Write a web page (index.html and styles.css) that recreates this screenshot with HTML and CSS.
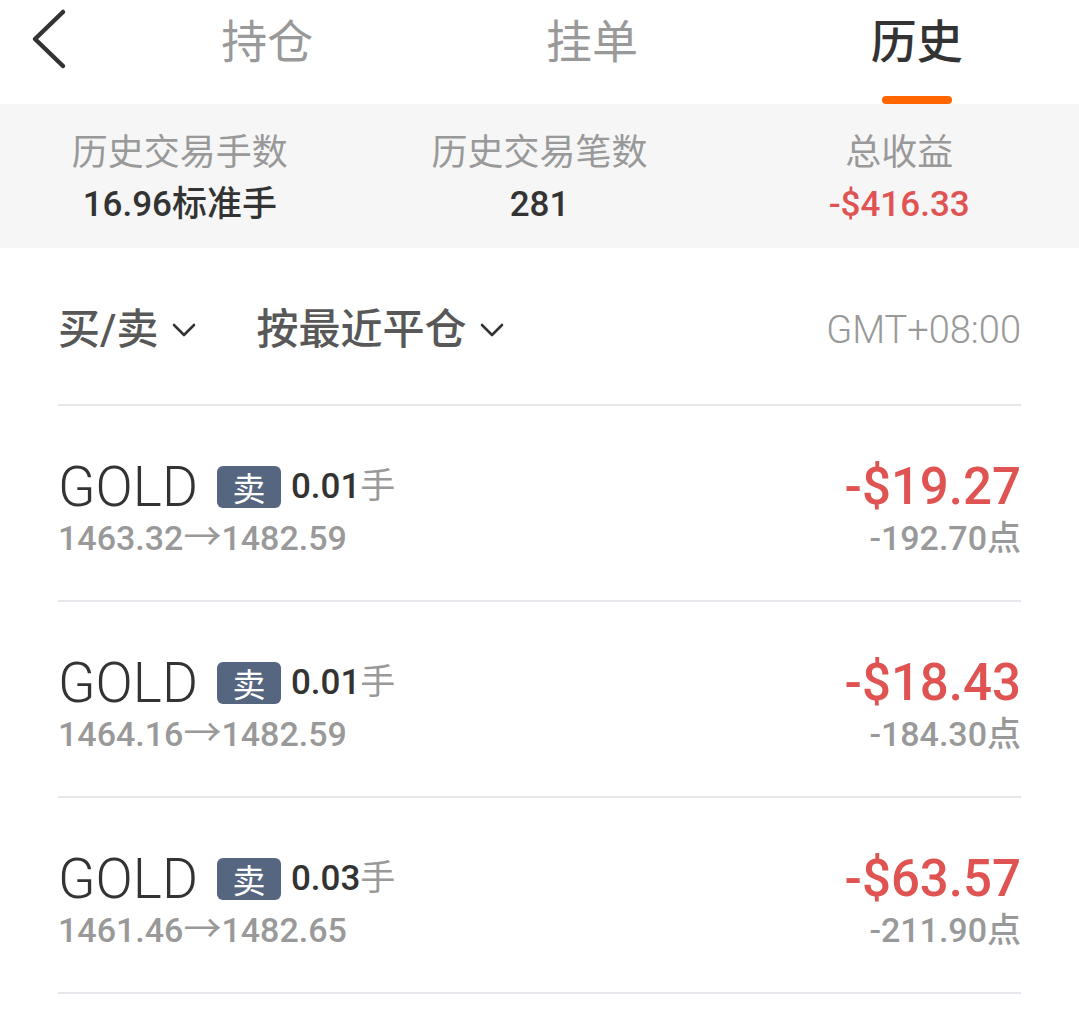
FILE: index.html
```html
<!DOCTYPE html>
<html lang="zh-CN">
<head>
    <meta charset="UTF-8">
    <meta name="viewport" content="width=device-width, initial-scale=1.0">
    <title>历史</title>
    <link rel="stylesheet" href="styles.css">
</head>
<body>

    <header class="topbar">
        <a class="back" href="#">
            <svg width="36" height="62" viewBox="0 0 36 62">
                <polyline points="32,4 4,31 32,58" fill="none" stroke="#333" stroke-width="4.5" stroke-linecap="round" stroke-linejoin="round"/>
            </svg>
        </a>
        <div class="tab">持仓</div>
        <div class="tab">挂单</div>
        <div class="tab active">历史</div>
    </header>

    <section class="summary">
        <div class="stat">
            <div class="stat-label">历史交易手数</div>
            <div class="stat-value">16.96标准手</div>
        </div>
        <div class="stat">
            <div class="stat-label">历史交易笔数</div>
            <div class="stat-value">281</div>
        </div>
        <div class="stat">
            <div class="stat-label">总收益</div>
            <div class="stat-value loss">-$416.33</div>
        </div>
    </section>

    <div class="filters">
        <div class="filter">买/卖
            <svg class="caret" width="24" height="14" viewBox="0 0 24 14"><polyline points="2,2 12,12 22,2" fill="none" stroke="#333" stroke-width="2.6" stroke-linecap="round" stroke-linejoin="round"/></svg>
        </div>
        <div class="filter">按最近平仓
            <svg class="caret" width="24" height="14" viewBox="0 0 24 14"><polyline points="2,2 12,12 22,2" fill="none" stroke="#333" stroke-width="2.6" stroke-linecap="round" stroke-linejoin="round"/></svg>
        </div>
        <div class="tz">GMT+08:00</div>
    </div>

    <ul class="trades">
        <li class="trade">
            <div class="trade-left">
                <div class="trade-main">
                    <span class="symbol">GOLD</span>
                    <span class="side">卖</span>
                    <span class="lots"><b>0.01</b>手</span>
                </div>
                <div class="trade-sub">1463.32<span class="arrow">→</span>1482.59</div>
            </div>
            <div class="trade-right">
                <div class="pnl">-$19.27</div>
                <div class="trade-sub">-192.70点</div>
            </div>
        </li>
        <li class="trade">
            <div class="trade-left">
                <div class="trade-main">
                    <span class="symbol">GOLD</span>
                    <span class="side">卖</span>
                    <span class="lots"><b>0.01</b>手</span>
                </div>
                <div class="trade-sub">1464.16<span class="arrow">→</span>1482.59</div>
            </div>
            <div class="trade-right">
                <div class="pnl">-$18.43</div>
                <div class="trade-sub">-184.30点</div>
            </div>
        </li>
        <li class="trade">
            <div class="trade-left">
                <div class="trade-main">
                    <span class="symbol">GOLD</span>
                    <span class="side">卖</span>
                    <span class="lots"><b>0.03</b>手</span>
                </div>
                <div class="trade-sub">1461.46<span class="arrow">→</span>1482.65</div>
            </div>
            <div class="trade-right">
                <div class="pnl">-$63.57</div>
                <div class="trade-sub">-211.90点</div>
            </div>
        </li>
    </ul>

</body>
</html>
```

FILE: styles.css
```css
body {
    margin: 0;
    background: #fff;
    color: #333;
    font-family: Roboto, "Noto Sans CJK SC", sans-serif;
}

.topbar {
    display: flex;
    height: 104px;
    background: #fff;
}

.back {
    display: flex;
    align-items: flex-start;
    width: 105px;
    flex-shrink: 0;
    padding: 8px 0 0 31px;
    box-sizing: border-box;
}

.tab {
    flex: 1;
    display: flex;
    flex-direction: column;
    align-items: center;
    font-family: "Noto Sans CJK SC", sans-serif;
    font-size: 46px;
    line-height: 76px;
    color: #999;
}

.tab.active {
    color: #333;
    font-weight: 500;
}

.tab.active::after {
    content: "";
    margin-top: auto;
    width: 70px;
    height: 8px;
    border-radius: 4px;
    background: #ff6600;
}

.summary {
    display: flex;
    height: 144px;
    padding-top: 21px;
    box-sizing: border-box;
    background: #f6f6f6;
}

.stat {
    flex: 1;
    text-align: center;
}

.stat-label {
    font-family: "Noto Sans CJK SC", sans-serif;
    font-size: 36px;
    line-height: 48px;
    color: #999;
}

.stat-value {
    margin-top: 8px;
    font-size: 35px;
    line-height: 48px;
    font-weight: 500;
    color: #333;
}

.loss {
    color: #e05353;
}

.filters {
    display: flex;
    align-items: center;
    height: 156px;
    padding: 8px 58px 0;
    box-sizing: border-box;
}

.filter {
    display: flex;
    align-items: center;
    margin-right: 60px;
    font-size: 42px;
    line-height: 50px;
    font-weight: 500;
    color: #585858;
}

.caret {
    margin-left: 14px;
}

.tz {
    margin-left: auto;
    font-size: 38px;
    font-weight: 300;
    color: #999;
}

.trades {
    list-style: none;
    margin: 0 58px;
    padding: 0;
    border-top: 2px solid #e6e6ec;
}

.trade {
    display: flex;
    justify-content: space-between;
    padding: 50px 0 42px;
    border-bottom: 2px solid #e6e6ec;
}

.trade-main {
    display: flex;
    align-items: center;
    height: 62px;
}

.symbol {
    font-size: 55px;
    font-weight: 300;
    line-height: 62px;
    color: #333;
    margin-right: 19px;
}

.side {
    display: flex;
    align-items: center;
    justify-content: center;
    width: 64px;
    height: 42px;
    border-radius: 6px;
    background: #566680;
    color: #fff;
    font-family: "Noto Sans CJK SC", sans-serif;
    font-size: 33px;
    margin-right: 10px;
}

.lots {
    font-size: 35px;
    line-height: 62px;
    color: #999;
}

.lots b {
    font-weight: 500;
    color: #333;
}

.trade-sub {
    height: 40px;
    font-size: 34px;
    line-height: 40px;
    font-weight: 500;
    color: #999;
}

.arrow {
    font-family: "Noto Sans CJK SC", sans-serif;
    font-size: 38px;
    line-height: 0;
    font-weight: 400;
}

.trade-right {
    text-align: right;
}

.pnl {
    height: 62px;
    font-size: 51px;
    line-height: 62px;
    font-weight: 500;
    color: #e05353;
}
```
